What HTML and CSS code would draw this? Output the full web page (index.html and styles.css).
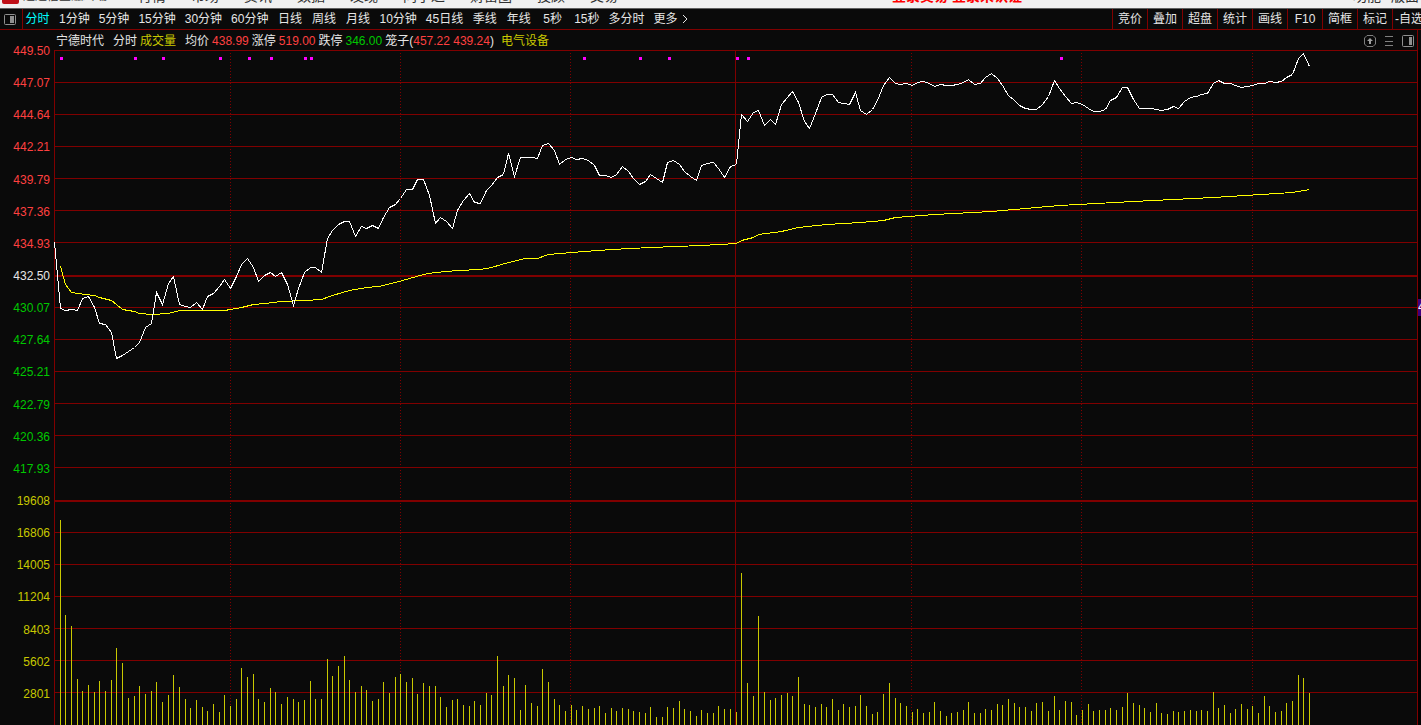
FILE: index.html
```
<!DOCTYPE html>
<html lang="zh-CN">
<head>
    <meta charset="UTF-8">
    <meta name="viewport" content="width=device-width, initial-scale=1.0">
    <title>宁德时代 分时</title>
    <link rel="stylesheet" href="styles.css">
</head>
<body>

    <!-- Main menu -->
    <nav class="menubar">
        <svg class="logo" width="17" height="20" viewBox="0 0 17 20">
            <rect width="17" height="20" rx="2" fill="#c01018"/>
            <path d="M4 16l4-3v-8h6v6l-4 5z" fill="#fff"/>
        </svg>
        <span class="app-name">通达信金融终端</span>
        <a href="#">行情</a>
        <a href="#">市场</a>
        <a href="#">资讯</a>
        <a href="#">数据</a>
        <a href="#">发现</a>
        <a href="#">问小达</a>
        <a href="#">财富圈</a>
        <a href="#">投顾</a>
        <a href="#">交易</a>
        <strong class="login-state">登录交易 登录未认证</strong>
        <span class="menu-right">
            <a href="#">功能</a>
            <a href="#">版面</a>
        </span>
    </nav>

    <!-- Period toolbar -->
    <div class="toolbar">
        <button class="panel-toggle" aria-label="侧栏">
            <svg width="12" height="11" viewBox="0 0 12 11">
                <rect x=".5" y=".5" width="11" height="10" rx="1" fill="none" stroke="#909090"/>
                <rect x="6" y="2" width="4" height="7" fill="#909090"/>
            </svg>
        </button>
        <div class="periods">
            <button class="active">分时</button>
            <button>1分钟</button>
            <button>5分钟</button>
            <button>15分钟</button>
            <button>30分钟</button>
            <button>60分钟</button>
            <button>日线</button>
            <button>周线</button>
            <button>月线</button>
            <button>10分钟</button>
            <button>45日线</button>
            <button>季线</button>
            <button>年线</button>
            <button>5秒</button>
            <button>15秒</button>
            <button>多分时</button>
            <button class="more">更多<svg width="6" height="10" viewBox="0 0 6 10"><path d="M1 1l4 4-4 4" fill="none" stroke="#e6e6e6"/></svg></button>
        </div>
        <div class="tools">
            <button>竞价</button>
            <button>叠加</button>
            <button>超盘</button>
            <button>统计</button>
            <button>画线</button>
            <button>F10</button>
            <button>简框</button>
            <button>标记</button>
            <button class="cut">-自选</button>
        </div>
    </div>

    <!-- Stock info -->
    <div class="info">
        <span class="stock-name">宁德时代</span>
        <span class="mode">分时</span>
        <span class="yellow indicator">成交量</span>
        <span>均价</span>
        <span class="red">438.99</span>
        <span>涨停</span>
        <span class="red">519.00</span>
        <span>跌停</span>
        <span class="green">346.00</span>
        <span class="cage">笼子(<span class="red">457.22 439.24</span>)</span>
        <span class="yellow">电气设备</span>
        <div class="info-icons">
            <button aria-label="上移">
                <svg width="12" height="12" viewBox="0 0 12 12">
                    <path d="M3 .5h6L11.500 3v6L9 11.500H3L.5 9V3z" fill="none" stroke="#808080"/>
                    <path d="M6 3l3 3H7v3H5V6H3z" fill="#a0a0a0"/>
                </svg>
            </button>
            <button aria-label="菜单">
                <svg width="12" height="12" viewBox="0 0 12 12">
                    <path d="M2 1.500h8M2 6.500h8M2 10.500h8" stroke="#808080"/>
                </svg>
            </button>
            <button aria-label="面板">
                <svg width="12" height="12" viewBox="0 0 12 12">
                    <rect x=".5" y=".5" width="11" height="11" rx="1" fill="none" stroke="#909090"/>
                    <rect x="7" y="2" width="3" height="8" fill="#909090"/>
                </svg>
            </button>
        </div>
    </div>

    <!-- Chart -->
    <main class="chart">
        <div class="axis">
            <span class="red">449.50</span>
            <span class="red">447.07</span>
            <span class="red">444.64</span>
            <span class="red">442.21</span>
            <span class="red">439.79</span>
            <span class="red">437.36</span>
            <span class="red">434.93</span>
            <span>432.50</span>
            <span class="green">430.07</span>
            <span class="green">427.64</span>
            <span class="green">425.21</span>
            <span class="green">422.79</span>
            <span class="green">420.36</span>
            <span class="green">417.93</span>
            <span class="yellow">19608</span>
            <span class="yellow">16806</span>
            <span class="yellow">14005</span>
            <span class="yellow">11204</span>
            <span class="yellow">8403</span>
            <span class="yellow">5602</span>
            <span class="yellow">2801</span>
        </div>
        <div class="plot">
            <svg id="plot" viewBox="0 0 1364 675" preserveAspectRatio="none"></svg>
        </div>
        <div class="side">
            <button class="side-tab">4</button>
        </div>
    </main>

    <script src="chart.js"></script>
</body>
</html>
```
FILE: styles.css
```
* {
    box-sizing: border-box;
}

body {
    margin: 0;
    height: 100vh;
    display: flex;
    flex-direction: column;
    overflow: hidden;
    background-color: #0a0a0a;
    color: #e6e6e6;
    font-family: "Liberation Sans", "Noto Sans CJK SC", sans-serif;
    font-size: 12px;
    line-height: 20px;
    white-space: nowrap;
}

button {
    padding: 0;
    border: 0;
    background: none;
    color: inherit;
    font: inherit;
    white-space: nowrap;
}

svg {
    display: block;
}

.red {
    color: #ff4040;
}

.green {
    color: #00c800;
}

.yellow {
    color: #c8c800;
}

/* Main menu, scrolled up under the top edge */
.menubar {
    flex: none;
    height: 9px;
    display: flex;
    align-items: flex-end;
    gap: 25px;
    padding: 0 2px 2px;
    overflow: hidden;
    background-color: #f0f0f0;
    border-bottom: 1px solid #606060;
    color: #303030;
    font-size: 14px;
}

.menubar a {
    color: inherit;
    text-decoration: none;
}

.logo {
    flex: none;
    margin-bottom: 2px;
}

.app-name {
    margin-left: -21px;
    margin-right: 6px;
    font-size: 12px;
}

.login-state {
    margin-left: auto;
    color: #ff0000;
}

.menu-right {
    display: flex;
    gap: 10px;
    margin-left: 306px;
    margin-right: 0;
}

/* Period toolbar */
.toolbar {
    flex: none;
    display: flex;
    height: 21px;
    border-bottom: 1px solid #800000;
}

.panel-toggle {
    width: 23px;
    padding-left: 4px;
    border-right: 1px solid #800000;
}

.periods {
    display: flex;
    gap: 9px;
    padding-left: 2px;
}

.periods button {
    min-width: 25px;
}

.periods .active {
    color: #00ffff;
}

.periods .more {
    display: flex;
    align-items: center;
    gap: 4px;
}

.tools {
    display: flex;
    margin-left: auto;
}

.tools button {
    width: 35px;
    border-left: 1px solid #800000;
}

.tools .cut {
    width: 29px;
    padding-left: 2px;
    overflow: hidden;
    text-align: left;
}

/* Stock info */
.info {
    flex: none;
    display: flex;
    gap: 3px;
    height: 20px;
    margin-right: 3px;
    padding-top: 1px;
    padding-left: 56px;
    border-right: 1px solid #800000;
}

.stock-name {
    margin-right: 6px;
}

.indicator {
    margin-right: 6px;
}

.cage {
    margin-right: 4px;
}

.info-icons {
    display: flex;
    align-items: center;
    gap: 7px;
    margin-left: auto;
    padding-right: 3px;
}

/* Chart */
.chart {
    flex: 1;
    min-height: 0;
    display: flex;
}

.axis {
    width: 54px;
    margin-top: -9px;
    margin-bottom: 9px;
    padding-right: 4px;
    display: grid;
    grid-template-rows: repeat(21, minmax(0, 1fr));
    text-align: right;
}

.plot {
    flex: 1;
    min-width: 0;
}

.plot svg {
    width: 100%;
    height: 100%;
    shape-rendering: crispEdges;
}

.plot line,
.plot polyline {
    fill: none;
    stroke-width: 1;
    vector-effect: non-scaling-stroke;
}

.plot .grid {
    stroke: #800000;
}

.plot .thick {
    stroke-width: 2;
}

.plot .dotted {
    stroke-dasharray: 1 2;
}

.plot .price {
    stroke: #ffffff;
}

.plot .average {
    stroke: #ffff00;
}

.plot .volume {
    stroke: #c8c800;
}

.plot .mark {
    fill: #ff00ff;
}

.side {
    position: relative;
    width: 3px;
    overflow: hidden;
    background-color: #000000;
}

.side-tab {
    position: absolute;
    top: 249px;
    left: 0;
    width: 16px;
    height: 17px;
    background-color: #400080;
    color: #ffffff;
    line-height: 17px;
    text-align: left;
}
```
FILE: chart.js
```
const svg = document.getElementById("plot");
const HEIGHT = 675;
const WIDTH = 1363;
const ROWS = 21;

// One value per minute, measured down from the 449.50 line
const price = [
    192, 258, 260, 259, 260, 248, 246, 257, 273, 274, 282, 308, 305, 301, 297, 292, 277, 273, 242, 254,
    233, 226, 254, 256, 257, 252, 259, 246, 243, 236, 229, 238, 226, 214, 208, 217, 231, 225, 222, 226,
    222, 234, 255, 238, 222, 217, 217, 222, 188, 180, 174, 171, 171, 186, 176, 178, 175, 178, 167, 157,
    154, 148, 139, 139, 129, 129, 145, 173, 167, 171, 178, 160, 150, 143, 152, 153, 140, 135, 127, 124,
    103, 126, 107, 107, 107, 108, 95, 93, 100, 114, 109, 107, 109, 108, 110, 115, 125, 125, 127, 124,
    116, 121, 128, 134, 131, 124, 128, 132, 112, 110, 114, 121, 126, 130, 115, 113, 112, 118, 127, 116,
    114, 64, 71, 62, 60, 75, 69, 74, 54, 47, 41, 52, 71, 78, 63, 47, 44, 44, 52, 53,
    54, 42, 60, 64, 59, 50, 35, 27, 33, 34, 33, 35, 32, 31, 33, 36, 34, 35, 35, 34,
    32, 29, 34, 33, 27, 23, 28, 35, 45, 50, 55, 58, 59, 59, 54, 46, 30, 38, 46, 53,
    52, 54, 58, 61, 61, 59, 50, 47, 37, 37, 49, 58, 58, 58, 59, 60, 59, 56, 58, 51,
    47, 46, 44, 43, 33, 30, 33, 33, 35, 37, 36, 35, 33, 33, 31, 32, 31, 27, 24, 8,
    3, 16
];

// [minute, y] of the average price line
const average = [
    [1, 216], [2, 234], [3, 242], [4, 243], [7, 245], [8, 247], [10, 250], [11, 254], [12, 259], [14, 261],
    [15, 263], [17, 264], [20, 263], [22, 260], [30, 260], [31, 259], [33, 257], [35, 254], [37, 253],
    [40, 251], [44, 250], [47, 249], [49, 245], [52, 240], [55, 237], [57, 236], [60, 232], [65, 224],
    [67, 222], [71, 220], [75, 219], [77, 217], [80, 212], [83, 208], [85, 208], [87, 204], [91, 202],
    [98, 199], [105, 197], [114, 195], [120, 193], [121, 190], [123, 187], [124, 184], [128, 181],
    [131, 177], [136, 174], [142, 172], [146, 170], [148, 167], [155, 164], [165, 161], [177, 155],
    [190, 151], [204, 147], [218, 142], [221, 139]
];

// Bar height per minute, first bar is minute 1
const volume = [
    205, 110, 99, 46, 34, 40, 33, 44, 34, 45, 77, 62, 27, 29, 39, 31, 34, 43, 23, 30,
    50, 38, 26, 17, 25, 18, 14, 21, 13, 30, 19, 26, 57, 48, 51, 26, 23, 37, 33, 21,
    28, 26, 23, 25, 44, 26, 26, 66, 49, 59, 69, 45, 33, 39, 35, 24, 26, 43, 32, 48,
    51, 43, 47, 31, 42, 39, 39, 28, 18, 25, 26, 20, 19, 24, 20, 32, 30, 69, 39, 50,
    47, 15, 40, 22, 19, 56, 43, 26, 20, 14, 20, 15, 19, 16, 17, 19, 12, 17, 14, 17,
    16, 14, 13, 12, 18, 8, 8, 18, 17, 24, 16, 14, 9, 15, 12, 12, 19, 16, 16, 13,
    152, 42, 29, 109, 33, 25, 27, 30, 32, 29, 48, 21, 20, 18, 21, 18, 26, 15, 21, 18,
    19, 30, 19, 11, 13, 31, 42, 27, 22, 19, 13, 16, 12, 13, 23, 14, 9, 12, 13, 15,
    23, 12, 12, 16, 15, 21, 20, 26, 22, 18, 18, 14, 22, 23, 14, 29, 15, 24, 23, 10,
    15, 21, 14, 15, 15, 17, 15, 18, 32, 22, 20, 17, 13, 22, 12, 11, 14, 13, 14, 15,
    14, 15, 14, 33, 17, 20, 12, 16, 21, 16, 19, 12, 29, 19, 13, 14, 22, 24, 50, 47,
    32
];

const marks = [1, 14, 19, 29, 34, 38, 44, 45, 93, 103, 108, 120, 122, 177];

function add(name, className, attrs) {
    const el = document.createElementNS("http://www.w3.org/2000/svg", name);
    el.setAttribute("class", className);
    for (const key in attrs) {
        el.setAttribute(key, attrs[key]);
    }
    svg.appendChild(el);
}

// Centre of the pixel column for a minute
function px(minute) {
    return Math.round(minute * WIDTH / 240) + 0.5;
}

function gridX(minute) {
    return Math.floor(minute * WIDTH / 240) + 0.5;
}

function line(className, x1, y1, x2, y2) {
    add("line", className, { x1, y1, x2, y2 });
}

// Horizontal grid, the middle and the volume top are double
for (let i = 0; i < ROWS; i++) {
    const y = Math.floor(i * HEIGHT / ROWS);
    if (i === 7 || i === 14) {
        line("grid thick", 0, y + 1, 1364, y + 1);
    } else {
        line("grid", 0, y + 0.5, 1364, y + 0.5);
    }
}

// Vertical grid, every half hour
[0, 120, 240].forEach(m => line("grid", gridX(m), 0, gridX(m), HEIGHT));
[31, 61, 91, 151, 181, 211].forEach(m => line("grid dotted", gridX(m), 3, gridX(m), HEIGHT));

volume.forEach((h, i) => line("volume", px(i + 1), HEIGHT - h, px(i + 1), HEIGHT));

add("polyline", "average", { points: average.map(p => px(p[0]) + "," + (p[1] + 0.5)).join(" ") });
add("polyline", "price", { points: price.map((y, i) => px(i) + "," + (y + 0.5)).join(" ") });

marks.forEach(m => add("rect", "mark", { x: gridX(m) + 0.5, y: 7, width: 3, height: 3 }));
```
